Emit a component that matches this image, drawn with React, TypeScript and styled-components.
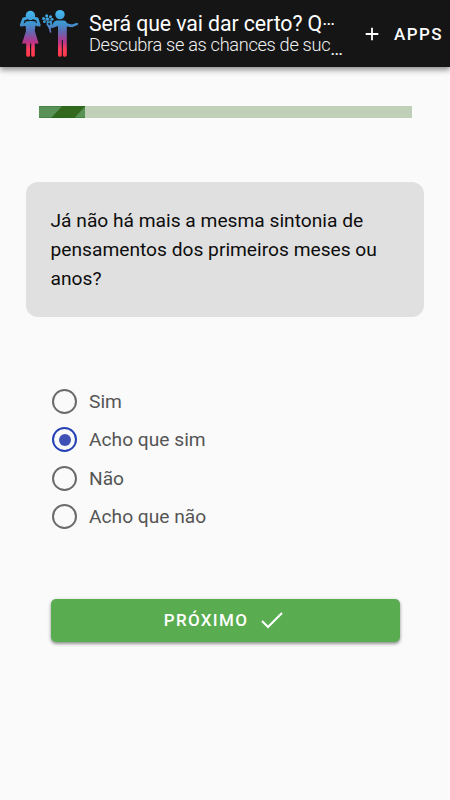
import React, { useState } from "react";
import styled, { createGlobalStyle } from "styled-components";

const GlobalStyle = createGlobalStyle`
  * { box-sizing: border-box; }
  body {
    margin: 0;
    background: #fafafa;
    font-family: Roboto, "Liberation Sans", sans-serif;
  }
`;

const Page = styled.div`
  display: flex;
  flex-direction: column;
  width: 450px;
  height: 800px;
  overflow: hidden;
  background: #fafafa;
`;

const Header = styled.header`
  display: flex;
  flex: none;
  height: 67px;
  padding-left: 17px;
  background: #151515;
  color: #fff;
  box-shadow: 0 2px 5px rgba(0, 0, 0, 0.3), 0 4px 6px rgba(0, 0, 0, 0.18);
`;

const Logo = styled.svg`
  flex: none;
  width: 64px;
  height: 67px;
`;

const Heading = styled.div`
  flex: none;
  width: 266px;
  padding: 13px 0 0 8px;
`;

const Title = styled.h1`
  margin: 0;
  font-size: 21.3px;
  font-weight: 400;
  line-height: 21px;
  letter-spacing: -0.09px;
  white-space: nowrap;
`;

const Subtitle = styled.p`
  margin: 0;
  font-size: 18.2px;
  font-weight: 300;
  line-height: 21px;
  letter-spacing: -0.32px;
  color: #f0f0f0;
  white-space: nowrap;
`;

const Ellipsis = styled.span<{ $shift: number }>`
  display: inline-block;
  font-size: 19px;
  line-height: 16px;
  font-weight: 400;
  letter-spacing: 0;
  transform: translateY(${(p) => p.$shift}px);
`;

const AppsButton = styled.button`
  display: flex;
  align-items: center;
  gap: 15px;
  padding: 0 0 0 18px;
  border: 0;
  background: none;
  color: #fff;
  font: 500 17px Roboto, sans-serif;
  letter-spacing: 1.4px;
`;

const ProgressTrack = styled.div`
  flex: none;
  height: 12px;
  margin: 39px 38.5px 0 38.5px;
  background: #c0cfb8;
`;

const ProgressFill = styled.svg`
  display: block;
  width: 46.5px;
  height: 12px;
`;

const Question = styled.section`
  flex: none;
  height: 135px;
  margin: 64px 26px 0;
  padding: 25px 24.5px;
  border-radius: 12px;
  background: #e0e0e0;
  color: #0d0d0d;
  font-size: 19.2px;
  line-height: 28.8px;
  white-space: nowrap;
`;

const Options = styled.div`
  display: flex;
  flex-direction: column;
  margin: 65.4px 0 0 52px;
`;

const Option = styled.label`
  display: flex;
  align-items: center;
  gap: 12px;
  height: 38.4px;
  color: #555;
  font-size: 19.2px;
`;

const Radio = styled.input`
  appearance: none;
  display: grid;
  place-items: center;
  width: 25px;
  height: 25px;
  margin: 0;
  border: 2.5px solid #6b6b6b;
  border-radius: 50%;
  &:checked { border-color: #2541b5; }
  &:checked::after {
    content: "";
    width: 12px;
    height: 12px;
    border-radius: 50%;
    background: #3f51b5;
  }
`;

const NextButton = styled.button`
  display: flex;
  flex: none;
  align-items: center;
  justify-content: center;
  gap: 13px;
  height: 43px;
  margin: 62.6px 50.5px 0;
  padding: 0 3px 0 0;
  border: 0;
  border-radius: 5px;
  background: #59ad50;
  color: #fff;
  font: 500 17px Roboto, sans-serif;
  letter-spacing: 1.3px;
  box-shadow: 0 2px 3px rgba(0, 0, 0, 0.32), 0 1px 4px rgba(0, 0, 0, 0.16);
`;

const choices = ["Sim", "Acho que sim", "Não", "Acho que não"];

const CoupleLogo = () => (
  <Logo viewBox="17 0 64 67" aria-hidden="true">
    <defs>
      <linearGradient id="couple" gradientUnits="userSpaceOnUse" x1="0" y1="10" x2="0" y2="57">
        <stop offset="0" stopColor="#45baf0" />
        <stop offset="0.3" stopColor="#3f93cf" />
        <stop offset="0.48" stopColor="#6765ae" />
        <stop offset="0.68" stopColor="#b93489" />
        <stop offset="0.84" stopColor="#ff3e5c" />
        <stop offset="1" stopColor="#ff3747" />
      </linearGradient>
    </defs>
    <g fill="url(#couple)">
      <circle cx="30.4" cy="15.5" r="4.7" />
      <path d="M25.3 21.5Q30.5 20.3 35.7 21.5L34.8 31L38.7 43.5H34.8V55.3Q34.8 56.8 33 56.8Q31.2 56.8 31.2 55.3V43.5H30V55.3Q30 56.8 28.2 56.8Q26.2 56.8 26.2 55.3V43.5H22L26 31Z" />
      <circle cx="60" cy="14.6" r="4.7" />
      <path d="M56.5 20.5H64Q66 20.5 67 23.2L72 24.6L76.3 23.1Q78.2 22.7 78.3 24L77.5 25L72.2 27.3L66.8 26.4V55.3Q66.5 56.8 64.8 56.8Q62.9 56.8 62.9 55.3V40H61.8V55.3Q61.6 56.8 60 56.8Q58 56.8 58 55.3V26.1L52.5 27.9L48 27.1V24.9L52 25L54 22Q55 20.5 56.5 20.5Z" />
      <circle cx="43.5" cy="18.4" r="1.5" />
      <circle cx="46.7" cy="15.8" r="1.5" />
      <circle cx="47.3" cy="19.2" r="1.6" />
      <circle cx="50.5" cy="16.7" r="1.5" />
      <circle cx="52.2" cy="19.4" r="1.4" />
      <circle cx="44.4" cy="21.7" r="1.4" />
      <circle cx="50.6" cy="21.9" r="1.5" />
      <circle cx="47.8" cy="22.2" r="1.2" />
    </g>
    <g fill="none" stroke="url(#couple)" strokeLinecap="round" strokeLinejoin="round">
      <path strokeWidth="2.9" d="M26.6 18.2L23.6 19L21.3 25.1L26.2 24.2M34.2 18.2L37.2 19L39.2 25.1L34.8 24.2" />
      <path strokeWidth="1.7" d="M47.2 24L49.5 28L50.6 32M51.3 23L50.1 29" />
      <path strokeWidth=".6" d="M43.5 18.4L47.3 19.2L46.7 15.8M47.3 19.2L50.5 16.7M47.3 19.2L52.2 19.4M47.3 19.2L44.4 21.7M47.3 19.2L50.6 21.9" />
    </g>
  </Logo>
);

export default function App() {
  const [selected, setSelected] = useState("Acho que sim");
  return (
    <>
      <GlobalStyle />
      <Page>
        <Header>
          <CoupleLogo />
          <Heading>
            <Title>Será que vai dar certo? Q<Ellipsis $shift={-6}>…</Ellipsis></Title>
            <Subtitle>Descubra se as chances de suc<Ellipsis $shift={4}>…</Ellipsis></Subtitle>
          </Heading>
          <AppsButton>
            <svg width="14" height="14" viewBox="0 0 14 14" fill="none" stroke="currentColor" strokeWidth="1.8" aria-hidden="true">
              <path d="M.7 7H13.3M7 .7V13.3" />
            </svg>
            APPS
          </AppsButton>
        </Header>
        <ProgressTrack>
          <ProgressFill viewBox="0 0 46 12" preserveAspectRatio="none" aria-hidden="true">
            <path fill="#5a9157" d="M0 0H46V12H0Z" />
            <path fill="#33691e" d="M23 0H46L35 12H12Z" />
            <path fill="none" stroke="#176b17" strokeOpacity=".3" d="M0 .5H46M0 11.5H46" />
          </ProgressFill>
        </ProgressTrack>
        <Question>
          Já não há mais a mesma sintonia de<br />
          pensamentos dos primeiros meses ou<br />
          anos?
        </Question>
        <Options>
          {choices.map((choice) => (
            <Option key={choice}>
              <Radio type="radio" name="answer" checked={selected === choice} onChange={() => setSelected(choice)} />
              {choice}
            </Option>
          ))}
        </Options>
        <NextButton>
          PRÓXIMO
          <svg width="22" height="17" viewBox="0 0 22 17" fill="none" stroke="currentColor" strokeWidth="2.1" aria-hidden="true">
            <path d="M1 9L7 15L21 1" />
          </svg>
        </NextButton>
      </Page>
    </>
  );
}
